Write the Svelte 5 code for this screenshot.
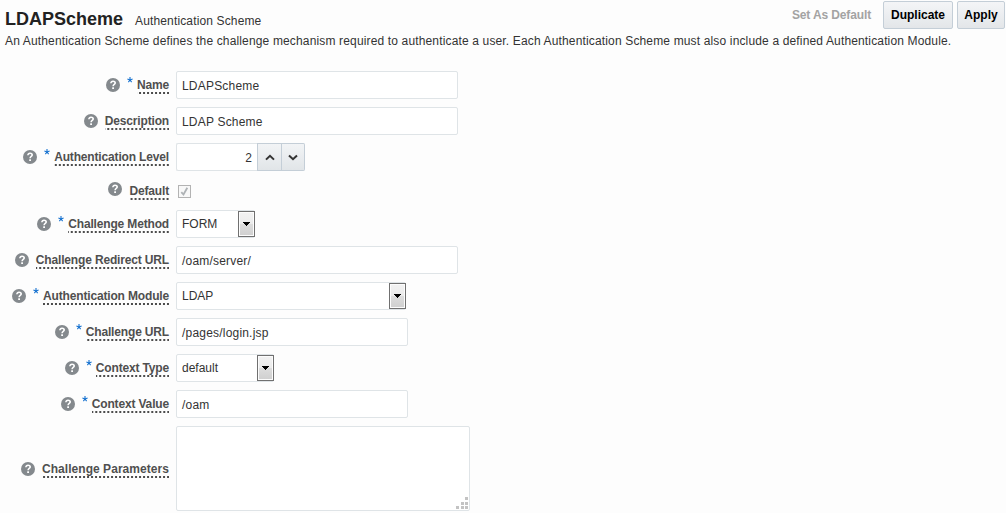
<script>
	const fields = [
		{ label: 'Name', required: true, type: 'text', value: 'LDAPScheme', width: 282 },
		{ label: 'Description', type: 'text', value: 'LDAP Scheme', width: 282 },
		{ label: 'Authentication Level', required: true, type: 'spin', value: '2', width: 129 },
		{ label: 'Default', type: 'check' },
		{ label: 'Challenge Method', required: true, type: 'select', value: 'FORM', width: 79 },
		{ label: 'Challenge Redirect URL', type: 'text', value: '/oam/server/', width: 282 },
		{ label: 'Authentication Module', required: true, type: 'select', value: 'LDAP', width: 230 },
		{ label: 'Challenge URL', required: true, type: 'text', value: '/pages/login.jsp', width: 232 },
		{ label: 'Context Type', required: true, type: 'select', value: 'default', width: 98 },
		{ label: 'Context Value', required: true, type: 'text', value: '/oam', width: 232 },
		{ label: 'Challenge Parameters', type: 'area', width: 294 }
	];
</script>

<div class="page">
	<header>
		<h1>LDAPScheme</h1>
		<span class="kind">Authentication Scheme</span>
		<div class="actions">
			<span class="disabled">Set As Default</span>
			<button class="duplicate">Duplicate</button>
			<button class="apply">Apply</button>
		</div>
	</header>

	<p>An Authentication Scheme defines the challenge mechanism required to authenticate a user. Each Authentication Scheme must also include a defined Authentication Module.</p>

	<div class="form">
		{#each fields as field}
			<div class="row {field.type}">
				<div class="caption">
					<svg class="help" width="14" height="14" viewBox="0 0 14 14">
						<circle cx="7" cy="7" r="7" fill="#84898d" />
						<path d="M4.9 5.3C4.9 3.9 5.8 3.3 7 3.3s2.2.7 2.2 1.8C9.2 6.5 7.1 6.5 7.1 8.3" fill="none" stroke="#fff" stroke-width="1.6" />
						<rect x="6.2" y="9.3" width="1.8" height="1.7" fill="#fff" />
					</svg>
					{#if field.required}
						<svg class="star" width="6" height="6" viewBox="0 0 6 6">
							<path d="M3 0v3M.4 2.1L3 3l2.6-.9M1.4 5.1L3 3l1.6 2.1" fill="none" stroke="#1672d0" stroke-width="1.1" />
						</svg>
					{/if}
					<span class="label">{field.label}
						<svg class="dots" height="2"><line x1="100%" y1="1" x2="0" y2="1" stroke="#4c4c4c" stroke-width="2" stroke-dasharray="2 2" /></svg>
					</span>
				</div>

				{#if field.type === 'check'}
					<svg class="checkbox" width="13" height="13" viewBox="0 0 13 13">
						<rect x=".5" y=".5" width="12" height="12" fill="#f8f8f8" stroke="#b3b3b3" />
						<path d="M3.3 7.1l2.2 2.4 3.8-6.7" fill="none" stroke="#aeb2b5" stroke-width="1.8" />
					</svg>
				{:else}
					<div class="control" style="width: {field.width}px">
						<span class="value">{field.value || ''}</span>
						{#if field.type === 'spin'}
							<span class="step">
								<svg width="10" height="7" viewBox="0 0 10 7"><path d="M1 5.6L5 1.8l4 3.8" /></svg>
							</span>
							<span class="step">
								<svg width="10" height="7" viewBox="0 0 10 7"><path d="M1 1.4l4 3.8 4-3.8" /></svg>
							</span>
						{:else if field.type === 'select'}
							<span class="drop">
								<svg width="7" height="4" viewBox="0 0 7 4"><path d="M0 0h7v1H6v1H5v1H4v1H3V3H2V2H1V1H0z" /></svg>
							</span>
						{:else if field.type === 'area'}
							<svg class="grip" width="12" height="12" viewBox="0 0 12 12">
								<path d="M9 0h3v3H9zM5 5h3v3H5zM9 5h3v3H9zM0 9h3v3H0zM5 9h3v3H5zM9 9h3v3H9z" />
							</svg>
						{/if}
					</div>
				{/if}
			</div>
		{/each}
	</div>
</div>

<style>
	:global(body) {
		margin: 0;
		background: #fdfdfd;
	}

	.page {
		height: 513px;
		overflow: hidden;
		font-family: "Liberation Sans", Arial, sans-serif;
		font-size: 12px;
		line-height: 14px;
		color: #333;
	}

	header {
		display: flex;
		height: 34px;
		padding-left: 5px;
	}

	h1 {
		margin: 8px 0 0;
		font-size: 18px;
		line-height: 22px;
		color: #222;
	}

	.kind {
		margin: 14px 0 0 12px;
		letter-spacing: 0.14px;
	}

	.actions {
		display: flex;
		gap: 4px;
		margin: 1px 1px 0 auto;
	}

	.disabled {
		margin: 7px 8px 0 0;
		font-weight: bold;
		letter-spacing: -0.13px;
		color: #a3a3a3;
	}

	button {
		height: 28px;
		padding: 0 0 1px;
		border: 1px solid #c4ced7;
		border-radius: 2px;
		background: linear-gradient(#f4f5f7, #e3e6e9);
		font: bold 12px "Liberation Sans", Arial, sans-serif;
		color: #000;
	}

	.duplicate {
		width: 70px;
	}

	.apply {
		width: 48px;
	}

	p {
		margin: 0 0 0 5px;
		height: 37px;
		letter-spacing: 0.15px;
		white-space: nowrap;
	}

	.form {
		display: flex;
		flex-direction: column;
		gap: 8px;
	}

	.row {
		display: flex;
		height: 28px;
	}

	.row.check {
		height: 23px;
	}

	.row.area {
		height: 85px;
	}

	.caption {
		display: flex;
		justify-content: flex-end;
		width: 169px;
		margin-right: 7px;
	}

	.help {
		margin: 7px 7px 0 0;
	}

	.star {
		margin: 6px 4px 0 0;
	}

	.label {
		position: relative;
		height: 16px;
		margin-top: 7px;
		font-weight: bold;
		letter-spacing: -0.16px;
		color: #4f4f4f;
	}

	.dots {
		position: absolute;
		left: 0;
		top: 14px;
		width: 100%;
	}

	.check .help {
		margin-top: 3px;
	}

	.check .label {
		margin-top: 5px;
	}

	.area .help {
		margin-top: 36px;
	}

	.area .label {
		margin-top: 36px;
		letter-spacing: 0.05px;
	}

	.checkbox {
		margin: 6px 0 0 2px;
	}

	.control {
		position: relative;
		display: flex;
		box-sizing: border-box;
		border: 1px solid #dfe4e7;
		border-radius: 2px;
		background: #fff;
	}

	.value {
		flex: 1;
		padding: 7px 0 0 5px;
		letter-spacing: 0.2px;
	}

	.select .value {
		padding-top: 6px;
		letter-spacing: 0;
	}

	.spin .control {
		border-width: 1px 0 1px 1px;
	}

	.spin .value {
		padding-right: 5px;
		text-align: right;
	}

	.step {
		display: flex;
		align-items: center;
		justify-content: center;
		box-sizing: border-box;
		width: 25px;
		margin: -1px 0;
		border: 1px solid #c4ced7;
		background: linear-gradient(#f2f4f6, #e1e5e8);
	}

	.step + .step {
		width: 23px;
		border-left: 0;
		border-radius: 0 2px 2px 0;
	}

	.step path {
		fill: none;
		stroke: #333;
		stroke-width: 2;
	}

	.drop {
		display: flex;
		align-items: center;
		justify-content: center;
		box-sizing: border-box;
		width: 17px;
		margin-right: -1px;
		border: 1px solid #707070;
		background: linear-gradient(#f2f2f2, #ebebeb 50%, #dddddd 50%, #cfcfcf);
		box-shadow: inset 0 0 0 1px #fcfcfc;
	}

	.grip {
		position: absolute;
		right: 1px;
		bottom: 1px;
		fill: #c3c3c3;
	}
</style>
